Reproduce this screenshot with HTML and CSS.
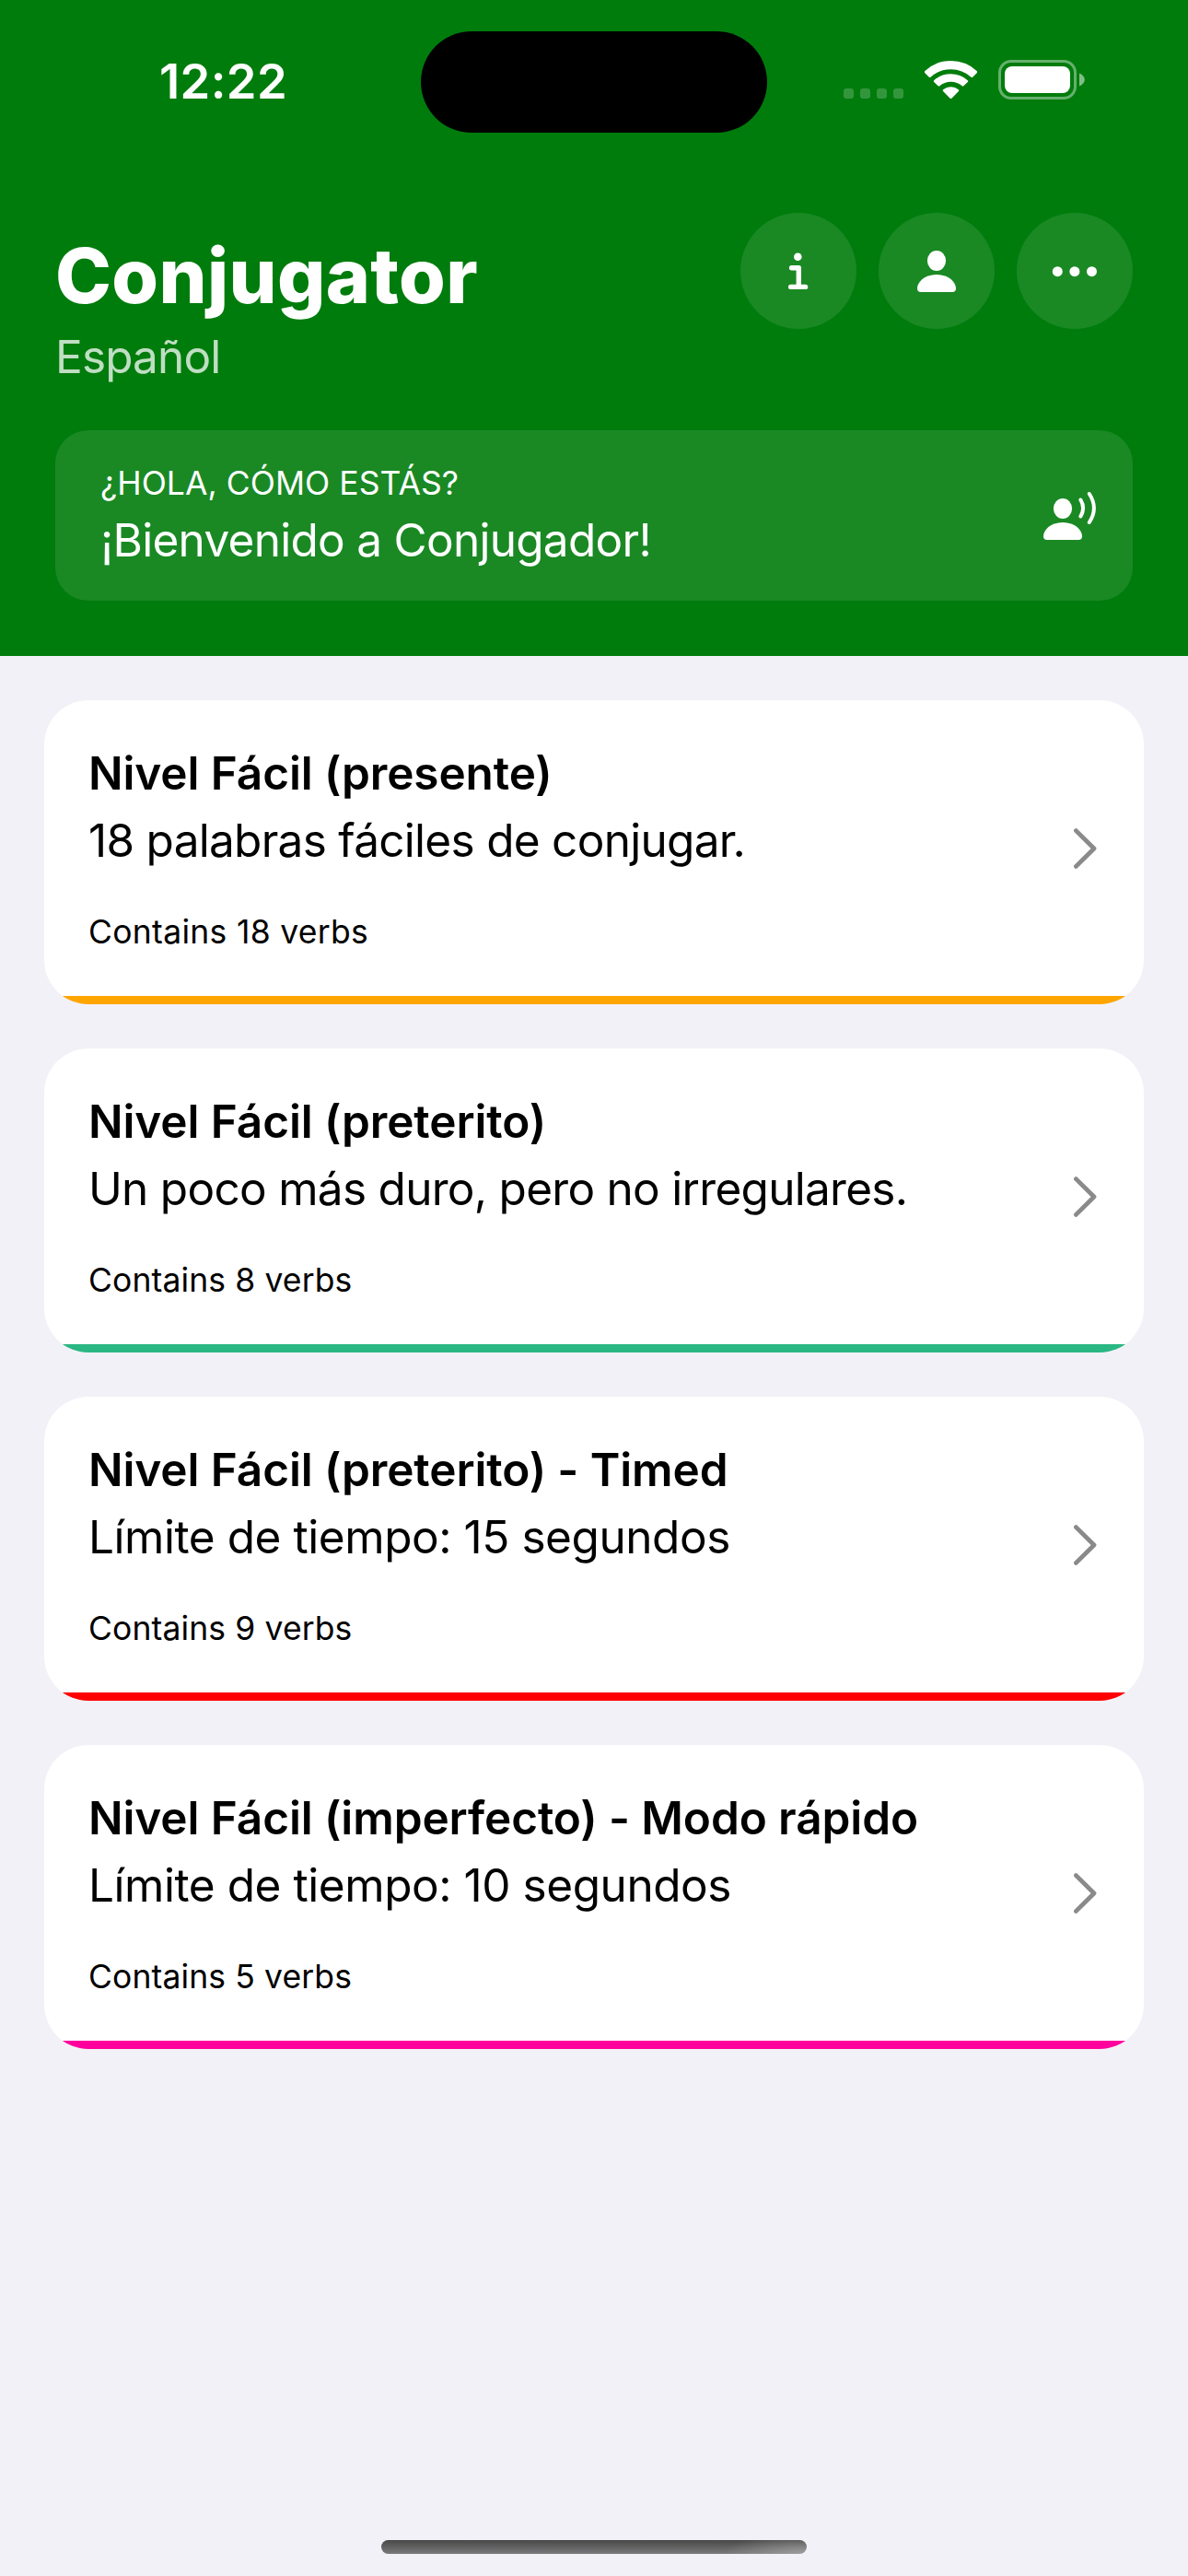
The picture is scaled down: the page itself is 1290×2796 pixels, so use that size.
FILE: index.html
```html
<!DOCTYPE html>
<html lang="es">
<head>
<meta charset="utf-8">
<meta name="viewport" content="width=device-width, initial-scale=1">
<title>Conjugator</title>
<link rel="stylesheet" href="styles.css">
</head>
<body>
<div class="screen">
  <header class="header">
    <div class="status-bar">
      <span class="status-time">12:22</span>
      <div class="island"></div>
      <div class="status-icons">
        <svg class="icon-signal" width="65" height="43" viewBox="0 0 65 43">
          <rect x="0" y="31" width="11" height="11" rx="3"/>
          <rect x="18" y="31" width="11" height="11" rx="3"/>
          <rect x="36" y="31" width="11" height="11" rx="3"/>
          <rect x="54" y="31" width="11" height="11" rx="3"/>
        </svg>
        <svg class="icon-wifi" width="57" height="43" viewBox="-28.5 -42 57 43">
          <path d="M-27.6 -28.9A40.6 40.6 0 0 1 27.6 -28.9L22.8 -24.2A33.8 33.8 0 0 0 -22.8 -24.2Z"/>
          <path d="M-17.5 -18.9A26.4 26.4 0 0 1 17.5 -18.9L13 -14.6A20 20 0 0 0 -13 -14.6Z"/>
          <path d="M-7.6 -8.8A12.2 12.2 0 0 1 7.6 -8.8L0 -1.2Z"/>
        </svg>
        <svg class="icon-battery" width="94" height="43" viewBox="0 0 94 43">
          <rect class="battery-case" x="1.5" y="1.5" width="82" height="40" rx="12.5"/>
          <rect class="battery-level" x="7" y="7" width="71" height="29" rx="8"/>
          <path class="battery-cap" d="M88 14.5C91.500 16 93.800 18.500 93.800 21.500S91.500 27 88 28.500Z"/>
        </svg>
      </div>
    </div>

    <div class="header-main">
      <div class="titles">
        <h1 class="app-title">Conjugator</h1>
        <p class="app-language">Español</p>
      </div>
      <nav class="actions">
        <button class="round-button" aria-label="Información">
          <svg width="126" height="126" viewBox="0 0 126 126">
            <circle cx="62.300" cy="47.700" r="4.300"/>
            <path class="info-stroke" d="M55.600 59.700H63.300V80M54.700 80.400H70.600"/>
          </svg>
        </button>
        <button class="round-button" aria-label="Perfil">
          <svg width="126" height="126" viewBox="0 0 126 126">
            <ellipse cx="63" cy="52" rx="10.100" ry="11.100"/>
            <path d="M42 82C42 75.500 49.500 67 63 67S84 75.500 84 82Q84 86 80 86H46Q42 86 42 82Z"/>
          </svg>
        </button>
        <button class="round-button" aria-label="Más">
          <svg width="126" height="126" viewBox="0 0 126 126">
            <circle cx="44.300" cy="63.700" r="5.500"/>
            <circle cx="62.900" cy="63.700" r="5.500"/>
            <circle cx="81.500" cy="63.700" r="5.500"/>
          </svg>
        </button>
      </nav>
    </div>

    <section class="banner">
      <div class="banner-text">
        <p class="banner-caption">¿HOLA, CÓMO ESTÁS?</p>
        <p class="banner-message">¡Bienvenido a Conjugador!</p>
      </div>
      <svg class="icon-speaker" width="58" height="54" viewBox="0 0 58 54">
        <ellipse cx="21" cy="19" rx="10.100" ry="11.100"/>
        <path d="M0 49C0 42.500 7.500 34 21 34S42 42.500 42 49Q42 53 38 53H4Q0 53 0 49Z"/>
        <path class="wave" d="M40.400 9.500Q45.800 18.500 40.400 27.500M49.800 3Q60 18.500 49.800 34"/>
      </svg>
    </section>
  </header>

  <main class="levels">
    <article class="card card-orange">
      <div class="card-text">
        <h2 class="card-title">Nivel Fácil (presente)</h2>
        <p class="card-description">18 palabras fáciles de conjugar.</p>
        <p class="card-count count-wide">Contains 18 verbs</p>
      </div>
      <svg class="chevron" width="25" height="44" viewBox="0 0 25 44"><path d="M2.400 2.600L22 22L2.400 41.400"/></svg>
    </article>
    <article class="card card-teal">
      <div class="card-text">
        <h2 class="card-title">Nivel Fácil (preterito)</h2>
        <p class="card-description">Un poco más duro, pero no irregulares.</p>
        <p class="card-count">Contains 8 verbs</p>
      </div>
      <svg class="chevron" width="25" height="44" viewBox="0 0 25 44"><path d="M2.400 2.600L22 22L2.400 41.400"/></svg>
    </article>
    <article class="card card-red">
      <div class="card-text">
        <h2 class="card-title">Nivel Fácil (preterito) - Timed</h2>
        <p class="card-description description-timed">Límite de tiempo: 15 segundos</p>
        <p class="card-count">Contains 9 verbs</p>
      </div>
      <svg class="chevron" width="25" height="44" viewBox="0 0 25 44"><path d="M2.400 2.600L22 22L2.400 41.400"/></svg>
    </article>
    <article class="card card-pink">
      <div class="card-text">
        <h2 class="card-title">Nivel Fácil (imperfecto) - Modo rápido</h2>
        <p class="card-description description-timed">Límite de tiempo: 10 segundos</p>
        <p class="card-count">Contains 5 verbs</p>
      </div>
      <svg class="chevron" width="25" height="44" viewBox="0 0 25 44"><path d="M2.400 2.600L22 22L2.400 41.400"/></svg>
    </article>
  </main>

  <div class="home-indicator"></div>
</div>
</body>
</html>
```
FILE: styles.css
```css
* {
  box-sizing: border-box;
}

body {
  margin: 0;
  font-family: Inter, "Liberation Sans", sans-serif;
  background: #f2f1f7;
}

h1, h2, p {
  margin: 0;
  white-space: nowrap;
}

svg {
  display: block;
  flex: none;
}

.screen {
  display: flex;
  flex-direction: column;
  width: 1290px;
  height: 2796px;
  color: #000;
}

/* Header */

.header {
  height: 712px;
  padding-top: 34px;
  background: #007c0c;
  color: #fff;
}

.status-bar {
  display: grid;
  grid-template-columns: 457px 376px 1fr;
  height: 110px;
}

.status-time {
  padding: 24px 0 0 173px;
  font-size: 52.5px;
  font-weight: 600;
  line-height: 60px;
  letter-spacing: 0.4px;
}

.island {
  border-radius: 55px;
  background: #000;
}

.status-icons {
  display: flex;
  gap: 23px;
  padding: 31px 0 0 83px;
}

.icon-signal {
  fill: rgba(255, 255, 255, 0.2);
}

.icon-wifi {
  fill: #fff;
  stroke: #fff;
  stroke-width: 2.4;
  stroke-linejoin: round;
}

.battery-case {
  fill: none;
  stroke: rgba(255, 255, 255, 0.4);
  stroke-width: 3;
}

.battery-level {
  fill: #fff;
}

.battery-cap {
  fill: rgba(255, 255, 255, 0.5);
}

.header-main {
  display: flex;
  justify-content: space-between;
  align-items: flex-start;
  margin-top: 87px;
  padding: 0 60px;
}

.titles {
  padding-top: 19px;
}

.app-title {
  font-size: 82px;
  font-weight: 800;
  line-height: 100px;
  letter-spacing: 0.35px;
}

.app-language {
  margin-top: 7px;
  font-size: 49.5px;
  line-height: 60px;
  letter-spacing: -0.85px;
  color: rgba(255, 255, 255, 0.75);
}

.actions {
  display: flex;
  gap: 24px;
}

.round-button {
  width: 126px;
  height: 126px;
  padding: 0;
  border: 0;
  border-radius: 50%;
  background: rgba(255, 255, 255, 0.1);
  fill: #fff;
}

.info-stroke {
  fill: none;
  stroke: #fff;
  stroke-width: 5.4;
  stroke-linecap: round;
  stroke-linejoin: round;
}

.banner {
  display: flex;
  justify-content: space-between;
  height: 185px;
  margin: 50px 60px 0;
  padding: 36px 39px 0 49px;
  border-radius: 36px;
  background: rgba(255, 255, 255, 0.1);
}

.banner-caption {
  font-size: 35.5px;
  line-height: 44px;
  letter-spacing: 0.05px;
}

.banner-message {
  margin-top: 9px;
  font-size: 49.5px;
  line-height: 60px;
  letter-spacing: -0.72px;
}

.icon-speaker {
  margin-top: 30px;
  fill: #fff;
}

.wave {
  fill: none;
  stroke: #fff;
  stroke-width: 4;
  stroke-linecap: round;
}

/* Level cards */

.levels {
  display: flex;
  flex: 1;
  flex-direction: column;
  gap: 48px;
  padding: 48px;
}

.card {
  display: flex;
  justify-content: space-between;
  height: 330px;
  padding: 49px 51px 0 48px;
  border-radius: 48px;
  background: linear-gradient(var(--accent), var(--accent)) bottom / 100% 9px no-repeat #fff;
}

.card-orange { --accent: #ffa500; }
.card-teal { --accent: #2ab783; }
.card-red { --accent: #ff0000; }
.card-pink { --accent: #ff009c; }

.card-title {
  font-size: 49.5px;
  font-weight: 600;
  line-height: 60px;
  letter-spacing: -0.1px;
}

.card-description {
  margin-top: 13px;
  font-size: 49.5px;
  line-height: 60px;
  letter-spacing: -0.71px;
}

.description-timed {
  letter-spacing: -0.44px;
}

.card-count {
  margin-top: 48px;
  font-size: 35.5px;
  line-height: 44px;
  letter-spacing: 0.12px;
}

.count-wide {
  letter-spacing: 0.3px;
}

.chevron {
  margin-top: 90px;
  fill: none;
  stroke: #8a8a8c;
  stroke-width: 4.8;
  stroke-linecap: round;
  stroke-linejoin: round;
}

/* Home indicator */

.home-indicator {
  width: 462px;
  height: 15px;
  margin: 0 auto 24px;
  border-radius: 8px;
  background:
    radial-gradient(90px 22px at 100% 100%, rgba(190, 190, 190, 0.55), rgba(190, 190, 190, 0)),
    linear-gradient(#484848, #7a7a7c);
}
```
